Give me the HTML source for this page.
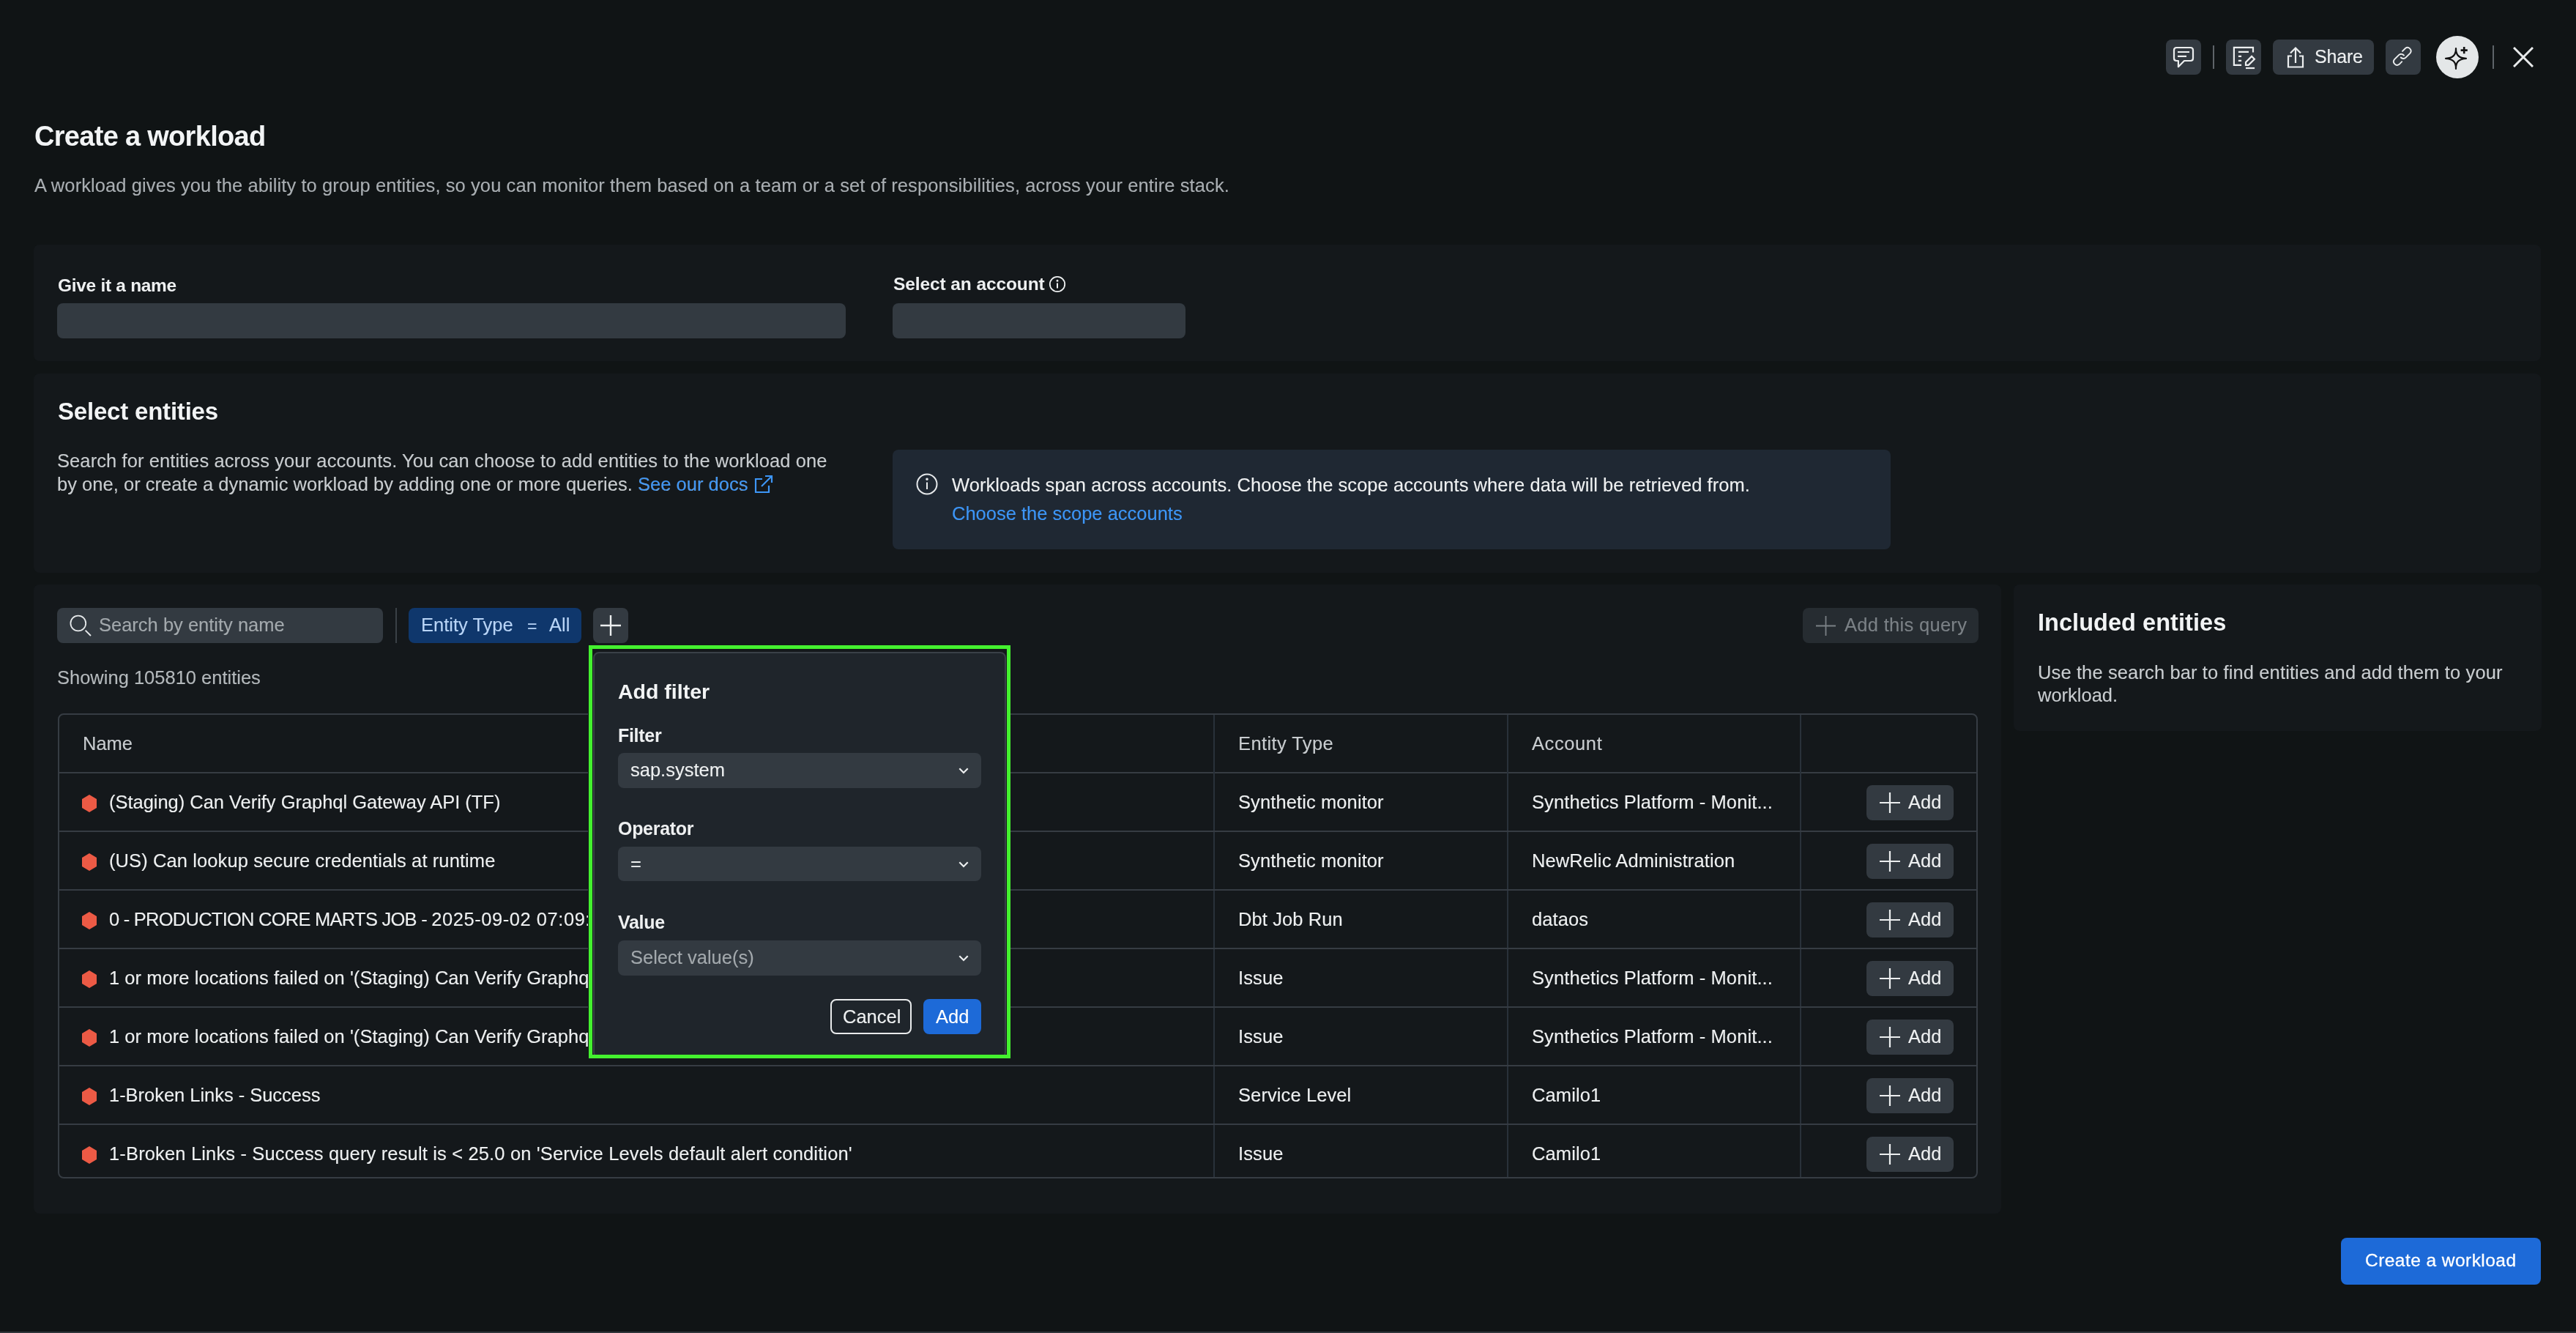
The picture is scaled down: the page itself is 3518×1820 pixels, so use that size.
<!DOCTYPE html>
<html><head><meta charset="utf-8"><style>
html,body{margin:0;padding:0;}
body{width:3518px;height:1820px;background:#101415;position:relative;overflow:hidden;font-family:"Liberation Sans", sans-serif;}
.a{position:absolute;}
.t{position:absolute;white-space:pre;line-height:0;will-change:transform;-webkit-font-smoothing:antialiased;}
</style></head><body>
<div class="a" style="left:2958px;top:54px;width:48px;height:48px;background:#333a41;border-radius:8px;"></div>
<div class="a" style="left:3022px;top:62px;width:2px;height:32px;background:#5e6469;"></div>
<div class="a" style="left:3040px;top:54px;width:48px;height:48px;background:#333a41;border-radius:8px;"></div>
<div class="a" style="left:3104px;top:54px;width:138px;height:48px;background:#333a41;border-radius:8px;"></div>
<div class="a" style="left:3258px;top:54px;width:48px;height:48px;background:#333a41;border-radius:8px;"></div>
<div class="a" style="left:3327px;top:49px;width:58px;height:58px;background:#e4e7e8;border-radius:29px;"></div>
<div class="a" style="left:3404px;top:62px;width:2px;height:32px;background:#5e6469;"></div>
<svg class="a" style="left:2958px;top:54px" width="48" height="48" viewBox="0 0 48 48" fill="none" stroke="#eceeef" stroke-width="2.2">
<path d="M14.5 11 H33.5 Q37 11 37 14.5 V25.5 Q37 29 33.5 29 H25 L16.9 37.2 V29 H14.5 Q11 29 11 25.5 V14.5 Q11 11 14.5 11 Z" stroke-linejoin="round"/>
<path d="M16 17 H32 M16 22.9 H28"/></svg>
<svg class="a" style="left:3040px;top:54px" width="48" height="48" viewBox="0 0 48 48" fill="none" stroke="#eceeef" stroke-width="2.2">
<path d="M21.1 34.9 H10.9 V10.9 H37 V17.5"/>
<path d="M16.9 16.9 H31 M16.9 22.9 H21.1 M16.9 28.9 H21.1"/>
<path d="M27 34.9 V31 L35.1 22.9 L38.9 26.7 L30.7 34.9 Z"/>
<path d="M27 39 H39.1"/></svg>
<svg class="a" style="left:3104px;top:54px" width="48" height="48" viewBox="0 0 48 48" fill="none" stroke="#eceeef" stroke-width="2.2">
<path d="M36 22.5 H41 V37.5 H21 V22.5 H26"/>
<path d="M31 32 V11.5 M24 18.5 L31 11.5 L38 18.5"/></svg>
<div class="t" style="left:3161px;top:77.34px;font-size:25px;color:#eef0f1;-webkit-text-stroke:0.12px #eef0f1;letter-spacing:-0.2px;">Share</div>
<svg class="a" style="left:3258px;top:54px" width="48" height="48" viewBox="0 0 48 48" fill="none" stroke="#eceeef" stroke-width="2.2" stroke-linecap="round">
<path d="M23 15.9 L26.9 12 A4.7 4.7 0 0 1 33.5 18.6 L27.5 24.6 A4.7 4.7 0 0 1 20.76 24.5" stroke-width="1.9"/>
<path d="M25 21.6 A4.7 4.7 0 0 0 18 21.2 L12 27.2 A4.7 4.7 0 0 0 18.6 33.8 L22.2 30.2" stroke-width="1.9"/></svg>
<svg class="a" style="left:3327px;top:49px" width="58" height="58" viewBox="0 0 58 58" fill="none" stroke="#111" stroke-width="2.4">
<path d="M27 17 Q27.5 30.3 13 30.8 Q27.5 31.3 27 45 Q26.5 31.3 41 30.8 Q26.5 30.3 27 17 Z" stroke-linejoin="round" stroke-width="2.2"/>
<path d="M38.2 15 V24.2 M33.6 19.6 H42.8" stroke-width="2.6"/></svg>
<svg class="a" style="left:3432px;top:64px" width="28" height="28" viewBox="0 0 28 28" stroke="#e8eaeb" stroke-width="3"><path d="M1 1 L27 27 M27 1 L1 27"/></svg>
<div class="t" style="left:47px;top:185.83px;font-size:38px;color:#f2f4f5;font-weight:700;letter-spacing:-0.7px;">Create a workload</div>
<div class="t" style="left:46.5px;top:253.46px;font-size:25.5px;color:#a9aeb2;-webkit-text-stroke:0.12px #a9aeb2;letter-spacing:0.09px;">A workload gives you the ability to group entities, so you can monitor them based on a team or a set of responsibilities, across your entire stack.</div>
<div class="a" style="left:46px;top:334px;width:3424px;height:159px;background:#14181b;border-radius:8px;"></div>
<div class="t" style="left:78.5px;top:389.51px;font-size:24.5px;color:#eef0f1;font-weight:700;letter-spacing:-0.3px;">Give it a name</div>
<div class="a" style="left:78px;top:414px;width:1077px;height:48px;background:#333a41;border-radius:8px;"></div>
<div class="t" style="left:1220px;top:387.51px;font-size:24.5px;color:#eef0f1;font-weight:700;letter-spacing:-0.1px;">Select an account</div>
<svg class="a" style="left:1432px;top:376px" width="24" height="24" viewBox="0 0 24 24" fill="none" stroke="#eef0f1" stroke-width="1.8"><circle cx="12" cy="12" r="10.2"/><path d="M12 10.5 V17.5" stroke-width="2"/><circle cx="12" cy="7.3" r="0.6" fill="#eef0f1"/></svg>
<div class="a" style="left:1219px;top:414px;width:400px;height:48px;background:#333a41;border-radius:8px;"></div>
<div class="a" style="left:46px;top:510px;width:3424px;height:272px;background:#14181b;border-radius:8px;"></div>
<div class="t" style="left:79px;top:561.77px;font-size:33px;color:#f2f4f5;font-weight:700;letter-spacing:-0.2px;">Select entities</div>
<div class="t" style="left:78px;top:629.16px;font-size:25.5px;color:#c9cdd0;-webkit-text-stroke:0.12px #c9cdd0;letter-spacing:0.09px;">Search for entities across your accounts. You can choose to add entities to the workload one</div>
<div class="t" style="left:78px;top:661.16px;font-size:25.5px;color:#c9cdd0;-webkit-text-stroke:0.12px #c9cdd0;letter-spacing:0.03px;">by one, or create a dynamic workload by adding one or more queries. <span style="color:#3d96f7">See our docs</span></div>
<svg class="a" style="left:1030px;top:648px" width="26" height="26" viewBox="0 0 26 26" fill="none" stroke="#3d96f7" stroke-width="2.2"><path d="M11 6 H2 V24 H20 V15"/><path d="M10 16 L24 2 M15 2 H24 V11"/></svg>
<div class="a" style="left:1219px;top:614px;width:1363px;height:136px;background:#1f2833;border-radius:8px;"></div>
<svg class="a" style="left:1251px;top:646px" width="30" height="30" viewBox="0 0 30 30" fill="none" stroke="#e6e9eb" stroke-width="2"><circle cx="15" cy="15" r="13.5"/><path d="M15 12.5 V22"/><circle cx="15" cy="8.3" r="0.8" fill="#e6e9eb"/></svg>
<div class="t" style="left:1299.5px;top:662.16px;font-size:25.5px;color:#eef0f1;-webkit-text-stroke:0.12px #eef0f1;letter-spacing:0.05px;">Workloads span across accounts. Choose the scope accounts where data will be retrieved from.</div>
<div class="t" style="left:1299.5px;top:701.16px;font-size:25.5px;color:#3d96f7;-webkit-text-stroke:0.12px #3d96f7;">Choose the scope accounts</div>
<div class="a" style="left:46px;top:798px;width:2687px;height:859px;background:#14181b;border-radius:8px;"></div>
<div class="a" style="left:78px;top:830px;width:445px;height:48px;background:#333a41;border-radius:8px;"></div>
<svg class="a" style="left:94px;top:839px" width="32" height="32" viewBox="0 0 32 32" fill="none" stroke="#e6e9eb" stroke-width="2.2"><circle cx="12.8" cy="12" r="10.4" stroke-width="1.8"/><path d="M22.6 21.6 L30 29" stroke-width="1.9"/></svg>
<div class="t" style="left:135px;top:853.16px;font-size:25.5px;color:#a3a9ad;-webkit-text-stroke:0.12px #a3a9ad;">Search by entity name</div>
<div class="a" style="left:540px;top:830px;width:2px;height:48px;background:#3a4046;"></div>
<div class="a" style="left:558px;top:830px;width:236px;height:48px;background:#0f376c;border-radius:8px;"></div>
<div class="t" style="left:575.4px;top:853.16px;font-size:25.5px;color:#b8d4f6;-webkit-text-stroke:0.12px #b8d4f6;">Entity Type</div>
<div class="t" style="left:719.5px;top:855.03px;font-size:23px;color:#b8d4f6;-webkit-text-stroke:0.12px #b8d4f6;">=</div>
<div class="t" style="left:749.6px;top:853.16px;font-size:25.5px;color:#b8d4f6;-webkit-text-stroke:0.12px #b8d4f6;">All</div>
<div class="a" style="left:810px;top:830px;width:48px;height:48px;background:#333a41;border-radius:8px;"></div>
<svg class="a" style="left:810px;top:830px" width="48" height="48" viewBox="0 0 48 48" stroke="#eceeef" stroke-width="2.4"><path d="M24 10 V38 M10 24 H38"/></svg>
<div class="a" style="left:2462px;top:830px;width:240px;height:48px;background:#262c31;border-radius:8px;"></div>
<svg class="a" style="left:2480px;top:841px" width="27" height="27" viewBox="0 0 26 26" stroke="#7b8186" stroke-width="1.7"><path d="M13 0 V26 M0 13 H26"/></svg>
<div class="t" style="left:2519px;top:853.16px;font-size:25.5px;color:#7b8186;-webkit-text-stroke:0.12px #7b8186;letter-spacing:0.3px;">Add this query</div>
<div class="t" style="left:78px;top:925.16px;font-size:25.5px;color:#b4b9bc;-webkit-text-stroke:0.12px #b4b9bc;">Showing 105810 entities</div>
<div class="a" style="left:79px;top:974px;width:2622px;height:635px;border:2px solid #363c43;border-radius:8px;box-sizing:border-box"></div>
<div class="a" style="left:79px;top:1054px;width:2622px;height:2px;background:#363c43;"></div>
<div class="a" style="left:1657px;top:976px;width:2px;height:631px;background:#29313a;"></div>
<div class="a" style="left:2058px;top:976px;width:2px;height:631px;background:#29313a;"></div>
<div class="a" style="left:2458px;top:976px;width:2px;height:631px;background:#29313a;"></div>
<div class="t" style="left:112.8px;top:1015.16px;font-size:25.5px;color:#c8cccf;-webkit-text-stroke:0.12px #c8cccf;">Name</div>
<div class="t" style="left:1691.4px;top:1015.16px;font-size:25.5px;color:#c8cccf;-webkit-text-stroke:0.12px #c8cccf;letter-spacing:0.4px;">Entity Type</div>
<div class="t" style="left:2091.7px;top:1015.16px;font-size:25.5px;color:#c8cccf;-webkit-text-stroke:0.12px #c8cccf;letter-spacing:0.6px;">Account</div>
<svg class="a" style="left:112px;top:1085px" width="20" height="24" viewBox="0 0 20 24"><path d="M10 0 L20 6 V18 L10 24 L0 18 V6 Z" fill="#ec5a45"/></svg>
<div class="t" style="left:149px;top:1095.16px;font-size:25.5px;color:#eef0f1;-webkit-text-stroke:0.12px #eef0f1;letter-spacing:-0.03px;">(Staging) Can Verify Graphql Gateway API (TF)</div>
<div class="t" style="left:1691.4px;top:1095.16px;font-size:25.5px;color:#eef0f1;-webkit-text-stroke:0.12px #eef0f1;letter-spacing:0.1px;">Synthetic monitor</div>
<div class="t" style="left:2091.7px;top:1095.16px;font-size:25.5px;color:#eef0f1;-webkit-text-stroke:0.12px #eef0f1;letter-spacing:0.1px;">Synthetics Platform - Monit...</div>
<div class="a" style="left:2549px;top:1072px;width:119px;height:48px;background:#333a41;border-radius:8px;"></div>
<svg class="a" style="left:2567px;top:1082px" width="28" height="28" viewBox="0 0 28 28" stroke="#eceeef" stroke-width="2.2"><path d="M14 0 V28 M0 14 H28"/></svg>
<div class="t" style="left:2606px;top:1095.16px;font-size:25.5px;color:#eef0f1;-webkit-text-stroke:0.12px #eef0f1;">Add</div>
<div class="a" style="left:79px;top:1134px;width:2622px;height:2px;background:#363c43;"></div>
<svg class="a" style="left:112px;top:1165px" width="20" height="24" viewBox="0 0 20 24"><path d="M10 0 L20 6 V18 L10 24 L0 18 V6 Z" fill="#ec5a45"/></svg>
<div class="t" style="left:149px;top:1175.16px;font-size:25.5px;color:#eef0f1;-webkit-text-stroke:0.12px #eef0f1;letter-spacing:0.1px;">(US) Can lookup secure credentials at runtime</div>
<div class="t" style="left:1691.4px;top:1175.16px;font-size:25.5px;color:#eef0f1;-webkit-text-stroke:0.12px #eef0f1;letter-spacing:0.1px;">Synthetic monitor</div>
<div class="t" style="left:2091.7px;top:1175.16px;font-size:25.5px;color:#eef0f1;-webkit-text-stroke:0.12px #eef0f1;letter-spacing:0.1px;">NewRelic Administration</div>
<div class="a" style="left:2549px;top:1152px;width:119px;height:48px;background:#333a41;border-radius:8px;"></div>
<svg class="a" style="left:2567px;top:1162px" width="28" height="28" viewBox="0 0 28 28" stroke="#eceeef" stroke-width="2.2"><path d="M14 0 V28 M0 14 H28"/></svg>
<div class="t" style="left:2606px;top:1175.16px;font-size:25.5px;color:#eef0f1;-webkit-text-stroke:0.12px #eef0f1;">Add</div>
<div class="a" style="left:79px;top:1214px;width:2622px;height:2px;background:#363c43;"></div>
<svg class="a" style="left:112px;top:1245px" width="20" height="24" viewBox="0 0 20 24"><path d="M10 0 L20 6 V18 L10 24 L0 18 V6 Z" fill="#ec5a45"/></svg>
<div class="t" style="left:149px;top:1255.16px;font-size:25.5px;color:#eef0f1;-webkit-text-stroke:0.12px #eef0f1;letter-spacing:0.1px;"><span style="letter-spacing:-0.75px">0 - PRODUCTION CORE MARTS JOB - </span><span style="letter-spacing:0.55px">2025-09-02 07:09:00</span></div>
<div class="t" style="left:1691.4px;top:1255.16px;font-size:25.5px;color:#eef0f1;-webkit-text-stroke:0.12px #eef0f1;letter-spacing:0.1px;">Dbt Job Run</div>
<div class="t" style="left:2091.7px;top:1255.16px;font-size:25.5px;color:#eef0f1;-webkit-text-stroke:0.12px #eef0f1;letter-spacing:0.1px;">dataos</div>
<div class="a" style="left:2549px;top:1232px;width:119px;height:48px;background:#333a41;border-radius:8px;"></div>
<svg class="a" style="left:2567px;top:1242px" width="28" height="28" viewBox="0 0 28 28" stroke="#eceeef" stroke-width="2.2"><path d="M14 0 V28 M0 14 H28"/></svg>
<div class="t" style="left:2606px;top:1255.16px;font-size:25.5px;color:#eef0f1;-webkit-text-stroke:0.12px #eef0f1;">Add</div>
<div class="a" style="left:79px;top:1294px;width:2622px;height:2px;background:#363c43;"></div>
<svg class="a" style="left:112px;top:1325px" width="20" height="24" viewBox="0 0 20 24"><path d="M10 0 L20 6 V18 L10 24 L0 18 V6 Z" fill="#ec5a45"/></svg>
<div class="t" style="left:149px;top:1335.16px;font-size:25.5px;color:#eef0f1;-webkit-text-stroke:0.12px #eef0f1;letter-spacing:0.05px;">1 or more locations failed on '(Staging) Can Verify Graphql Gateway API (TF)'</div>
<div class="t" style="left:1691.4px;top:1335.16px;font-size:25.5px;color:#eef0f1;-webkit-text-stroke:0.12px #eef0f1;letter-spacing:0.1px;">Issue</div>
<div class="t" style="left:2091.7px;top:1335.16px;font-size:25.5px;color:#eef0f1;-webkit-text-stroke:0.12px #eef0f1;letter-spacing:0.1px;">Synthetics Platform - Monit...</div>
<div class="a" style="left:2549px;top:1312px;width:119px;height:48px;background:#333a41;border-radius:8px;"></div>
<svg class="a" style="left:2567px;top:1322px" width="28" height="28" viewBox="0 0 28 28" stroke="#eceeef" stroke-width="2.2"><path d="M14 0 V28 M0 14 H28"/></svg>
<div class="t" style="left:2606px;top:1335.16px;font-size:25.5px;color:#eef0f1;-webkit-text-stroke:0.12px #eef0f1;">Add</div>
<div class="a" style="left:79px;top:1374px;width:2622px;height:2px;background:#363c43;"></div>
<svg class="a" style="left:112px;top:1405px" width="20" height="24" viewBox="0 0 20 24"><path d="M10 0 L20 6 V18 L10 24 L0 18 V6 Z" fill="#ec5a45"/></svg>
<div class="t" style="left:149px;top:1415.16px;font-size:25.5px;color:#eef0f1;-webkit-text-stroke:0.12px #eef0f1;letter-spacing:0.05px;">1 or more locations failed on '(Staging) Can Verify Graphql Gateway API (TF)'</div>
<div class="t" style="left:1691.4px;top:1415.16px;font-size:25.5px;color:#eef0f1;-webkit-text-stroke:0.12px #eef0f1;letter-spacing:0.1px;">Issue</div>
<div class="t" style="left:2091.7px;top:1415.16px;font-size:25.5px;color:#eef0f1;-webkit-text-stroke:0.12px #eef0f1;letter-spacing:0.1px;">Synthetics Platform - Monit...</div>
<div class="a" style="left:2549px;top:1392px;width:119px;height:48px;background:#333a41;border-radius:8px;"></div>
<svg class="a" style="left:2567px;top:1402px" width="28" height="28" viewBox="0 0 28 28" stroke="#eceeef" stroke-width="2.2"><path d="M14 0 V28 M0 14 H28"/></svg>
<div class="t" style="left:2606px;top:1415.16px;font-size:25.5px;color:#eef0f1;-webkit-text-stroke:0.12px #eef0f1;">Add</div>
<div class="a" style="left:79px;top:1454px;width:2622px;height:2px;background:#363c43;"></div>
<svg class="a" style="left:112px;top:1485px" width="20" height="24" viewBox="0 0 20 24"><path d="M10 0 L20 6 V18 L10 24 L0 18 V6 Z" fill="#ec5a45"/></svg>
<div class="t" style="left:149px;top:1495.16px;font-size:25.5px;color:#eef0f1;-webkit-text-stroke:0.12px #eef0f1;letter-spacing:-0.03px;">1-Broken Links - Success</div>
<div class="t" style="left:1691.4px;top:1495.16px;font-size:25.5px;color:#eef0f1;-webkit-text-stroke:0.12px #eef0f1;letter-spacing:0.1px;">Service Level</div>
<div class="t" style="left:2091.7px;top:1495.16px;font-size:25.5px;color:#eef0f1;-webkit-text-stroke:0.12px #eef0f1;letter-spacing:0.1px;">Camilo1</div>
<div class="a" style="left:2549px;top:1472px;width:119px;height:48px;background:#333a41;border-radius:8px;"></div>
<svg class="a" style="left:2567px;top:1482px" width="28" height="28" viewBox="0 0 28 28" stroke="#eceeef" stroke-width="2.2"><path d="M14 0 V28 M0 14 H28"/></svg>
<div class="t" style="left:2606px;top:1495.16px;font-size:25.5px;color:#eef0f1;-webkit-text-stroke:0.12px #eef0f1;">Add</div>
<div class="a" style="left:79px;top:1534px;width:2622px;height:2px;background:#363c43;"></div>
<svg class="a" style="left:112px;top:1565px" width="20" height="24" viewBox="0 0 20 24"><path d="M10 0 L20 6 V18 L10 24 L0 18 V6 Z" fill="#ec5a45"/></svg>
<div class="t" style="left:149px;top:1575.16px;font-size:25.5px;color:#eef0f1;-webkit-text-stroke:0.12px #eef0f1;letter-spacing:0.15px;">1-Broken Links - Success query result is &lt; 25.0 on 'Service Levels default alert condition'</div>
<div class="t" style="left:1691.4px;top:1575.16px;font-size:25.5px;color:#eef0f1;-webkit-text-stroke:0.12px #eef0f1;letter-spacing:0.1px;">Issue</div>
<div class="t" style="left:2091.7px;top:1575.16px;font-size:25.5px;color:#eef0f1;-webkit-text-stroke:0.12px #eef0f1;letter-spacing:0.1px;">Camilo1</div>
<div class="a" style="left:2549px;top:1552px;width:119px;height:48px;background:#333a41;border-radius:8px;"></div>
<svg class="a" style="left:2567px;top:1562px" width="28" height="28" viewBox="0 0 28 28" stroke="#eceeef" stroke-width="2.2"><path d="M14 0 V28 M0 14 H28"/></svg>
<div class="t" style="left:2606px;top:1575.16px;font-size:25.5px;color:#eef0f1;-webkit-text-stroke:0.12px #eef0f1;">Add</div>
<div class="a" style="left:2750px;top:798px;width:721px;height:200px;background:#14181b;border-radius:8px;"></div>
<div class="t" style="left:2782.7px;top:849.74px;font-size:32.5px;color:#f2f4f5;font-weight:700;letter-spacing:0.05px;">Included entities</div>
<div class="t" style="left:2782.7px;top:917.86px;font-size:25.5px;color:#c9cdd0;-webkit-text-stroke:0.12px #c9cdd0;letter-spacing:0.12px;">Use the search bar to find entities and add them to your</div>
<div class="t" style="left:2782.7px;top:949.46px;font-size:25.5px;color:#c9cdd0;-webkit-text-stroke:0.12px #c9cdd0;">workload.</div>
<div class="a" style="left:3197px;top:1690px;width:273px;height:64px;background:#1d6ad8;border-radius:8px;"></div>
<div class="t" style="left:3229.8px;top:1721.21px;font-size:24.5px;color:#ffffff;letter-spacing:0.45px;-webkit-text-stroke:0.3px #fff;">Create a workload</div>
<div class="a" style="left:0px;top:1818px;width:3518px;height:2px;background:#2f353a;"></div>
<div class="a" style="left:803px;top:880px;width:577px;height:566px;background:#14181b;"></div>
<div class="a" style="left:810px;top:890px;width:564px;height:555px;background:#1f252b;border:2px solid #3a4148;border-radius:8px;box-sizing:border-box"></div>
<div class="a" style="left:803.5px;top:880.8px;width:576.5px;height:564.2px;border:5.5px solid #44f12f;box-sizing:border-box"></div>
<div class="t" style="left:844.4px;top:944.12px;font-size:28.5px;color:#f2f4f5;font-weight:700;">Add filter</div>
<div class="t" style="left:844px;top:1003.84px;font-size:25px;color:#eef0f1;font-weight:700;letter-spacing:-0.3px;">Filter</div>
<div class="t" style="left:844px;top:1131.34px;font-size:25px;color:#eef0f1;font-weight:700;letter-spacing:-0.3px;">Operator</div>
<div class="t" style="left:844px;top:1259.34px;font-size:25px;color:#eef0f1;font-weight:700;letter-spacing:-0.3px;">Value</div>
<div class="a" style="left:844px;top:1028px;width:496px;height:48px;background:#333a41;border-radius:8px;"></div>
<div class="t" style="left:861px;top:1051.16px;font-size:25.5px;color:#eef0f1;-webkit-text-stroke:0.12px #eef0f1;">sap.system</div>
<svg class="a" style="left:1309px;top:1045.0px" width="14" height="14" viewBox="0 0 14 14" fill="none" stroke="#eceeef" stroke-width="2.2"><path d="M1.3 4.3 L7 10 L12.7 4.3"/></svg>
<div class="a" style="left:844px;top:1156px;width:496px;height:47px;background:#333a41;border-radius:8px;"></div>
<div class="t" style="left:861px;top:1179.16px;font-size:25.5px;color:#eef0f1;-webkit-text-stroke:0.12px #eef0f1;">=</div>
<svg class="a" style="left:1309px;top:1172.5px" width="14" height="14" viewBox="0 0 14 14" fill="none" stroke="#eceeef" stroke-width="2.2"><path d="M1.3 4.3 L7 10 L12.7 4.3"/></svg>
<div class="a" style="left:844px;top:1284px;width:496px;height:48px;background:#333a41;border-radius:8px;"></div>
<div class="t" style="left:861px;top:1307.16px;font-size:25.5px;color:#a3a9ad;-webkit-text-stroke:0.12px #a3a9ad;">Select value(s)</div>
<svg class="a" style="left:1309px;top:1301.0px" width="14" height="14" viewBox="0 0 14 14" fill="none" stroke="#eceeef" stroke-width="2.2"><path d="M1.3 4.3 L7 10 L12.7 4.3"/></svg>
<div class="a" style="left:1134px;top:1364px;width:111px;height:48px;border:2px solid #e9ebec;border-radius:8px;box-sizing:border-box"></div>
<div class="t" style="left:1150.6px;top:1387.66px;font-size:25.5px;color:#eef0f1;-webkit-text-stroke:0.12px #eef0f1;">Cancel</div>
<div class="a" style="left:1261px;top:1364px;width:79px;height:48px;background:#1d6ad8;border-radius:8px;"></div>
<div class="t" style="left:1278px;top:1387.66px;font-size:25.5px;color:#ffffff;-webkit-text-stroke:0.12px #ffffff;">Add</div>
</body></html>
